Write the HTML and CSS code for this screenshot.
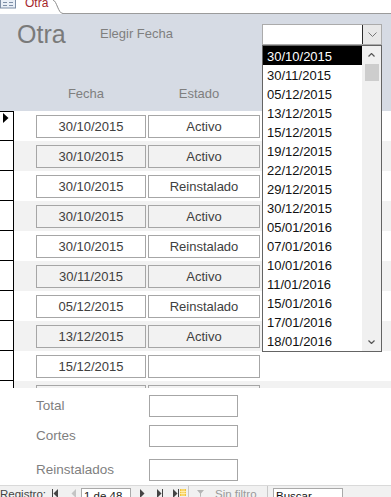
FILE: index.html
```html
<!DOCTYPE html>
<html lang="es">
<head>
  <meta charset="UTF-8">
  <title>Otra</title>
  <link rel="stylesheet" href="styles.css">
</head>
<body>
<div class="page">

  <!-- Pestaña del formulario -->
  <div class="tabs">
    <div class="tab">
      <svg class="tab-icon" viewBox="0 0 16 9">
        <rect x="0.5" y="-2" width="15" height="10" fill="#e8eef6" stroke="#7d8ea6"/>
        <line x1="3" y1="2.5" x2="7" y2="2.5" stroke="#7d8ea6"/>
        <line x1="9" y1="2.5" x2="13" y2="2.5" stroke="#7d8ea6"/>
        <line x1="3" y1="5.5" x2="7" y2="5.5" stroke="#7d8ea6"/>
        <line x1="9" y1="5.5" x2="13" y2="5.5" stroke="#7d8ea6"/>
      </svg>
      <span class="tab-name">Otra</span>
    </div>
    <svg class="tab-edge" viewBox="0 0 10 14">
      <path d="M0 0 C4 1 5 13.5 10 13.5" fill="none" stroke="#8c8c8c"/>
    </svg>
    <div class="tab-rest"></div>
  </div>

  <!-- Encabezado -->
  <div class="form-header">
    <div class="title-row">
      <h1 class="form-title">Otra</h1>
      <span class="pick-label">Elegir Fecha</span>
      <div class="combo">
        <div class="combo-input"></div>
        <div class="combo-btn">
          <svg width="9" height="5" viewBox="0 0 9 5"><path d="M0.5 0.5 L4.5 4.5 L8.5 0.5" fill="none" stroke="#777"/></svg>
        </div>
      </div>
    </div>
    <div class="col-heads">
      <span class="col-head col-fecha">Fecha</span>
      <span class="col-head col-estado">Estado</span>
    </div>
  </div>

  <!-- Detalle -->
  <div class="detail">
    <div class="row">
      <div class="sel"><svg width="13" height="14" viewBox="0 0 13 14"><polygon points="3,2 8.5,7 3,12" fill="#000"/></svg></div>
      <div class="cell cell-fecha">30/10/2015</div><div class="cell cell-estado">Activo</div>
    </div>
    <div class="row">
      <div class="sel"></div>
      <div class="cell cell-fecha">30/10/2015</div><div class="cell cell-estado">Activo</div>
    </div>
    <div class="row">
      <div class="sel"></div>
      <div class="cell cell-fecha">30/10/2015</div><div class="cell cell-estado">Reinstalado</div>
    </div>
    <div class="row">
      <div class="sel"></div>
      <div class="cell cell-fecha">30/10/2015</div><div class="cell cell-estado">Activo</div>
    </div>
    <div class="row">
      <div class="sel"></div>
      <div class="cell cell-fecha">30/10/2015</div><div class="cell cell-estado">Reinstalado</div>
    </div>
    <div class="row">
      <div class="sel"></div>
      <div class="cell cell-fecha">30/11/2015</div><div class="cell cell-estado">Activo</div>
    </div>
    <div class="row">
      <div class="sel"></div>
      <div class="cell cell-fecha">05/12/2015</div><div class="cell cell-estado">Reinstalado</div>
    </div>
    <div class="row">
      <div class="sel"></div>
      <div class="cell cell-fecha">13/12/2015</div><div class="cell cell-estado">Activo</div>
    </div>
    <div class="row">
      <div class="sel"></div>
      <div class="cell cell-fecha">15/12/2015</div><div class="cell cell-estado"></div>
    </div>
    <div class="row">
      <div class="sel"></div>
      <div class="cell cell-fecha"></div><div class="cell cell-estado"></div>
    </div>
  </div>

  <!-- Pie -->
  <div class="form-footer">
    <div class="total-row">
      <span class="total-label">Total</span>
      <div class="total-box"></div>
    </div>
    <div class="total-row">
      <span class="total-label">Cortes</span>
      <div class="total-box"></div>
    </div>
    <div class="total-row last">
      <span class="total-label">Reinstalados</span>
      <div class="total-box"></div>
    </div>
  </div>

  <!-- Barra de navegación -->
  <div class="navbar">
    <span class="nav-label">Registro:</span>
    <svg class="nav-first" width="6" height="9" viewBox="0 0 6 9"><rect x="0" y="0" width="1" height="9" fill="#444"/><polygon points="6,0 1.5,4.5 6,9" fill="#444"/></svg>
    <svg class="nav-prev" width="5" height="9" viewBox="0 0 5 9"><polygon points="5,0 0.5,4.5 5,9" fill="#c4c4c4"/></svg>
    <div class="nav-box">1 de 48</div>
    <svg class="nav-next" width="5" height="9" viewBox="0 0 5 9"><polygon points="0,0 4.5,4.5 0,9" fill="#444"/></svg>
    <svg class="nav-last" width="6" height="9" viewBox="0 0 6 9"><polygon points="0,0 4.5,4.5 0,9" fill="#444"/><rect x="5" y="0" width="1" height="9" fill="#444"/></svg>
    <svg class="nav-new" width="13" height="9" viewBox="0 0 13 9">
      <polygon points="0,0 4.5,4.5 0,9" fill="#444"/><rect x="5" y="0" width="1" height="9" fill="#444"/>
      <rect x="7" y="0" width="6" height="7" fill="#f3c43a"/>
      <path d="M7 2.5 H13 M7 4.5 H13 M9 0 V7 M11 0 V7" stroke="#fff3c0" stroke-width="0.8"/>
    </svg>
    <span class="nav-sep"></span>
    <svg class="nav-funnel" width="7" height="9" viewBox="0 0 7 9"><path d="M0 1 H7 L4 4.5 V8 L3 7.5 V4.5 Z" fill="#b5b5b5"/></svg>
    <span class="nav-filter">Sin filtro</span>
    <span class="nav-sep"></span>
    <div class="nav-search">Buscar</div>
  </div>

  <!-- Lista desplegable abierta -->
  <div class="date-list">
    <ul class="date-items">
      <li class="picked">30/10/2015</li>
      <li>30/11/2015</li>
      <li>05/12/2015</li>
      <li>13/12/2015</li>
      <li>15/12/2015</li>
      <li>19/12/2015</li>
      <li>22/12/2015</li>
      <li>29/12/2015</li>
      <li>30/12/2015</li>
      <li>05/01/2016</li>
      <li>07/01/2016</li>
      <li>10/01/2016</li>
      <li>11/01/2016</li>
      <li>15/01/2016</li>
      <li>17/01/2016</li>
      <li>18/01/2016</li>
    </ul>
    <div class="scroll">
      <div class="scroll-arrow">
        <svg width="7" height="4" viewBox="0 0 7 4"><path d="M0.5 3.5 L3.5 0.5 L6.5 3.5" fill="none" stroke="#555" stroke-width="1.2"/></svg>
      </div>
      <div class="scroll-thumb"></div>
      <div class="scroll-track"></div>
      <div class="scroll-arrow">
        <svg width="7" height="4" viewBox="0 0 7 4"><path d="M0.5 0.5 L3.5 3.5 L6.5 0.5" fill="none" stroke="#555" stroke-width="1.2"/></svg>
      </div>
    </div>
  </div>

</div>
</body>
</html>
```

FILE: styles.css
```css
* {
  box-sizing: border-box;
}

body {
  margin: 0;
  font-family: 'Liberation Sans', Arial, sans-serif;
  background: #fff;
  overflow: hidden;
}

.page {
  position: relative;
  width: 391px;
  height: 497px;
  overflow: hidden;
}

/* pestaña */
.tabs {
  display: flex;
  height: 14px;
  background: #fff;
}

.tab {
  display: flex;
  align-items: flex-start;
  width: 53px;
}

.tab-icon {
  width: 16px;
  height: 9px;
}

.tab-name {
  margin: -4px 0 0 9px;
  font-size: 12px;
  line-height: 14px;
  color: #a4262c;
}

.tab-edge {
  width: 10px;
  height: 14px;
}

.tab-rest {
  flex: 1;
  border-bottom: 1px solid #9b9b9b;
}

/* encabezado */
.form-header {
  height: 97px;
  background: #d6dbe4;
}

.title-row {
  display: flex;
  align-items: flex-start;
}

.form-title {
  width: 83px;
  margin: 6px 0 0 17px;
  font-size: 25px;
  line-height: 29px;
  font-weight: normal;
  color: #7a7a7a;
}

.pick-label {
  margin-top: 12px;
  font-size: 13px;
  line-height: 15px;
  color: #7f7f7f;
}

.combo {
  display: flex;
  width: 120px;
  height: 21px;
  margin: 10px 9px 0 auto;
  border: 1px solid #ababab;
  background: #fff;
}

.combo-input {
  flex: 1;
}

.combo-btn {
  display: flex;
  align-items: center;
  justify-content: center;
  width: 19px;
  border-left: 1px solid #2b2b2b;
  background: #e8e8e8;
}

.col-heads {
  display: flex;
  gap: 2px;
  margin-top: 37px;
  padding-left: 31px;
}

.col-head {
  font-size: 13px;
  line-height: 15px;
  color: #7f7f7f;
  text-align: center;
}

.col-fecha {
  width: 110px;
}

.col-estado {
  width: 112px;
}

/* detalle */
.detail {
  height: 277px;
  overflow: hidden;
}

.row {
  display: flex;
  height: 30px;
  background: #fff;
}

.row:nth-child(even) {
  background: #f2f2f2;
}

.sel {
  width: 14px;
  border-right: 1px solid #000;
  border-bottom: 1px solid #000;
  background: #fff;
}

.row:first-child .sel {
  box-shadow: inset 0 1px #000;
}

.sel svg {
  display: block;
}

.cell {
  height: 23px;
  margin-top: 4px;
  border: 1px solid #a6a6a6;
  background: #fff;
  font-size: 13px;
  line-height: 21px;
  text-align: center;
  color: #404040;
}

.row:nth-child(even) .cell {
  background: #f2f2f2;
}

.cell-fecha {
  width: 110px;
  margin-left: 22px;
}

.cell-estado {
  width: 112px;
  margin-left: 2px;
}

/* pie */
.form-footer {
  height: 97px;
  padding: 7px 0 0 36px;
  background: #fff;
}

.total-row {
  display: flex;
  align-items: center;
}

.total-row + .total-row {
  margin-top: 8px;
}

.total-row.last {
  margin-top: 12px;
}

.total-label {
  width: 113px;
  margin-top: -2px;
  font-size: 13.5px;
  color: #7f7f7f;
}

.total-box {
  width: 89px;
  height: 22px;
  border: 1px solid #a6a6a6;
}

/* navegación */
.navbar {
  display: flex;
  align-items: flex-start;
  height: 18px;
  border-top: 1px solid #d9d9d9;
  background: #f1f1f1;
  font-size: 11.5px;
  line-height: 14px;
  color: #444;
}

.nav-label {
  width: 51px;
  padding-top: 1px;
}

.navbar svg {
  margin-top: 3px;
  flex-shrink: 0;
}

.nav-first {
  margin-left: 1px;
}

.nav-prev {
  margin-left: 13px;
}

.nav-box {
  width: 50px;
  height: 16px;
  margin: 2px 0 0 5px;
  padding-left: 2px;
  border: 1px solid #a9a9a9;
  background: #fff;
  color: #222;
}

.nav-next {
  margin-left: 9px;
}

.nav-last {
  margin-left: 12px;
}

.nav-new {
  margin-left: 10px;
}

.nav-sep {
  width: 1px;
  height: 17px;
  margin-left: 2px;
  background: #c8c8c8;
}

.navbar .nav-funnel {
  margin-left: 8px;
}

.nav-filter {
  width: 52px;
  margin-left: 11px;
  padding-top: 1px;
  color: #9a9a9a;
}

.nav-filter + .nav-sep {
  margin-left: 0;
}

.nav-search {
  width: 70px;
  height: 16px;
  margin: 2px 0 0 5px;
  padding-left: 2px;
  border: 1px solid #a9a9a9;
  background: #fff;
  color: #111;
}

/* lista desplegable */
.date-list {
  position: absolute;
  left: 262px;
  top: 45px;
  display: flex;
  width: 120px;
  height: 307px;
  border: 1px solid #646464;
  background: #fff;
}

.date-items {
  width: 99px;
  margin: 0;
  padding: 0;
  list-style: none;
}

.date-items li {
  height: 19px;
  padding-left: 4px;
  font-size: 13px;
  line-height: 21px;
  color: #111;
}

.date-items li.picked {
  background: #000;
  color: #fff;
}

.scroll {
  display: flex;
  flex-direction: column;
  width: 19px;
  background: #f0f0f0;
}

.scroll-arrow {
  display: flex;
  align-items: center;
  justify-content: center;
  height: 18px;
}

.scroll-thumb {
  height: 17px;
  margin: 0 2px 0 3px;
  background: #cdcdcd;
}

.scroll-track {
  flex: 1;
}
```
